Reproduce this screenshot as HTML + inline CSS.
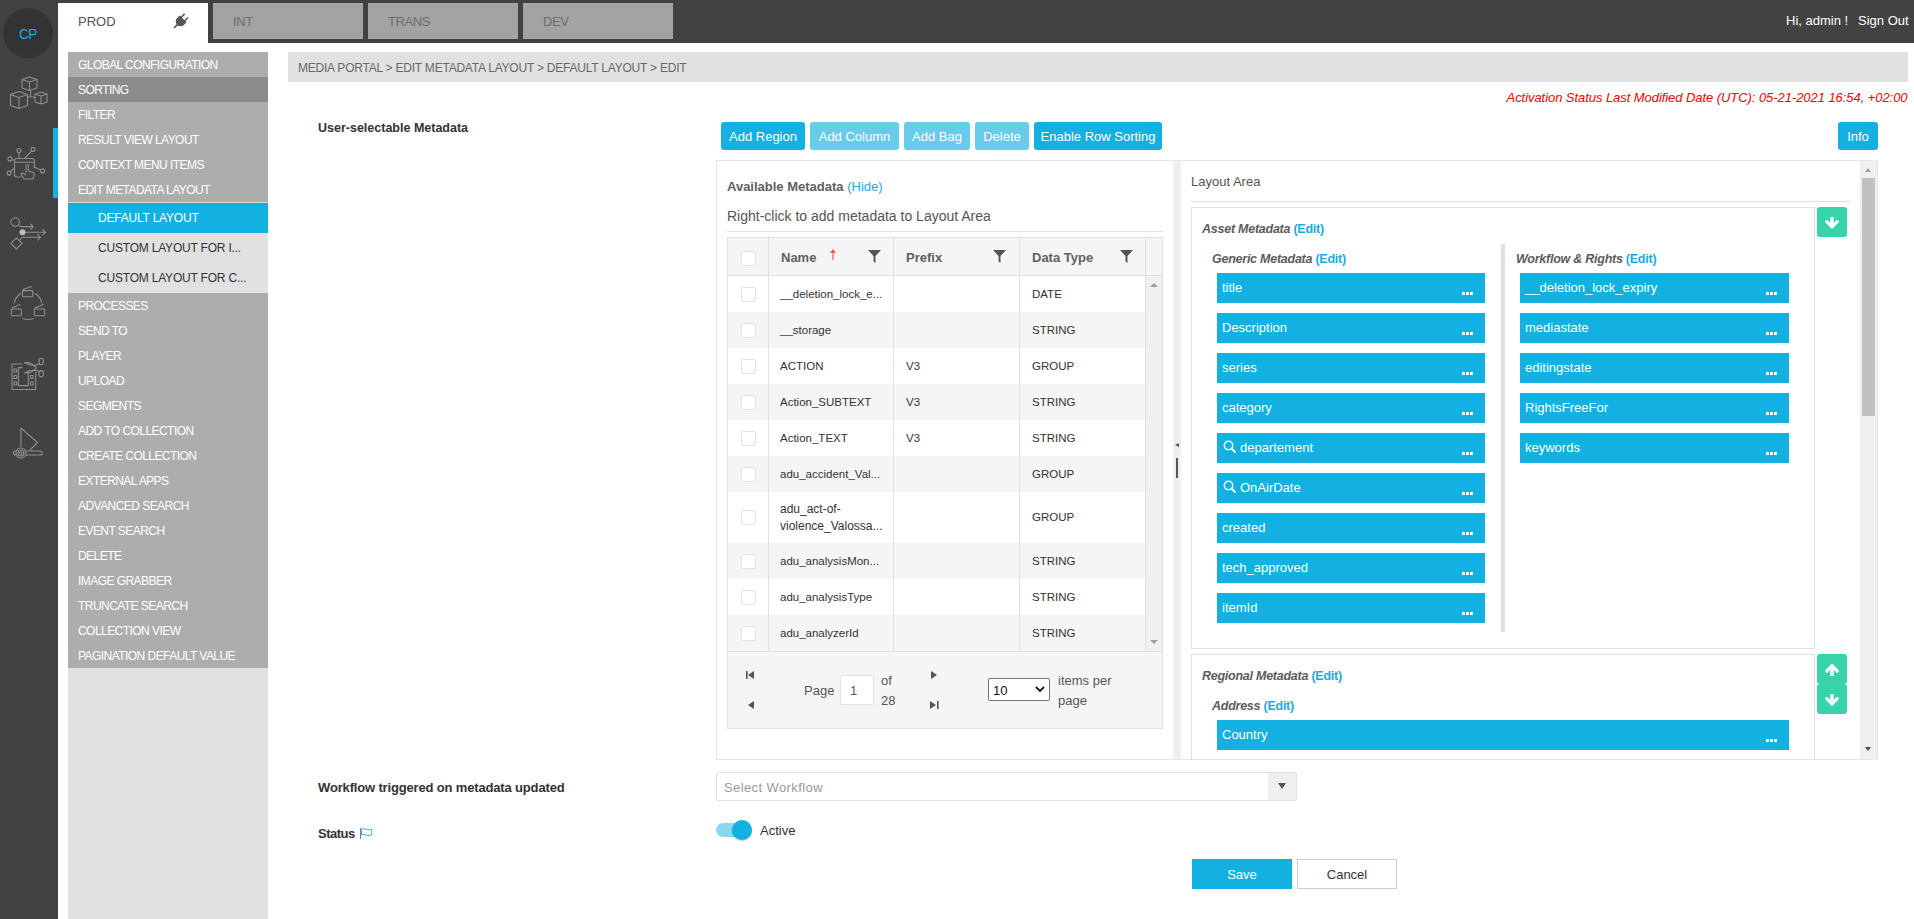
<!DOCTYPE html>
<html><head><meta charset="utf-8">
<style>
*{box-sizing:border-box;margin:0;padding:0}
html,body{width:1914px;height:919px;overflow:hidden;background:#fff;font-family:"Liberation Sans",sans-serif;color:#333}
.a{position:absolute}
.t{position:absolute;white-space:nowrap;line-height:1}
#topbar{left:0;top:0;width:1914px;height:43px;background:#424242}
#side{left:0;top:0;width:58px;height:919px;background:#424242}
.tab{top:3px;height:36px;width:150px;background:#a3a3a3;color:#6e6e6e;font-size:13px;letter-spacing:-0.4px}
.tab span{position:absolute;left:20px;top:11px}
#menu{left:68px;top:52px;width:200px;height:867px;background:#e1e1e1}
.mi{position:absolute;left:0;width:200px;height:25px;background:#adadad;color:#fff;font-size:12px;letter-spacing:-0.55px}
.mi span{position:absolute;left:10px;top:7px;line-height:1}
.sub{position:absolute;left:0;width:200px;height:30px;background:#e1e1e1;color:#333;font-size:12px;letter-spacing:-0.2px}
.sub span{position:absolute;left:30px;top:9px;line-height:1}
.btn{position:absolute;top:122px;height:28px;border-radius:3px;background:#13b1e1;color:#fff;font-size:13px}
.btn span{position:absolute;left:0;right:0;text-align:center;top:8px;line-height:1}
.btn.dis{background:#67cbea}
.tile{position:absolute;height:30px;background:#12b1e1;color:#fff;font-size:13px}
.tile span{position:absolute;left:5px;top:8px;line-height:1}
.tile i{position:absolute;right:20px;top:19px;width:3px;height:3px;background:#fff;box-shadow:4px 0 #fff,8px 0 #fff}
.ed{color:#24a9df;font-style:normal}
.cb{width:15px;height:15px;background:#fff;border:1px solid #e2e2e2;border-radius:2px}
.cell{font-size:11.5px;color:#333}
.hd{font-size:13px;font-weight:bold;color:#606060}
.gbtn{position:absolute;width:30px;height:30px;background:#38d3aa;border-radius:3px}
.gbtn svg{position:absolute;left:0;top:0}
.sect{font-size:12.5px;letter-spacing:-0.25px;font-weight:bold;font-style:italic;color:#5c5c5c}
</style></head><body>
<div id="topbar" class="a"></div>
<div id="side" class="a"></div>
<!-- CP circle -->
<div class="a" style="left:3px;top:8px;width:50px;height:50px;border-radius:50%;background:#333"></div>
<div class="t" style="left:19px;top:26px;font-size:15.3px;letter-spacing:-0.6px;color:#13b1e0;transform:scaleX(0.88);transform-origin:0 0">CP</div>
<!-- active indicator -->
<div class="a" style="left:53px;top:128px;width:5px;height:70px;background:#13b1e1"></div>

<!-- sidebar icons -->
<svg class="a" style="left:0;top:60px" width="58" height="420" viewBox="0 60 58 420" fill="none" stroke="#8e8e8e" stroke-width="1.1" stroke-linejoin="round" stroke-linecap="round">
<path d="M22 79.5 L29.5 77 L37 79.5 L37 88 L29.5 90.5 L22 88 Z M22 79.5 L29.5 82 L37 79.5 M29.5 82 V90.5"/>
<path d="M10.5 94.5 L19 91.5 L27.5 94.5 L27.5 105.5 L19 108.5 L10.5 105.5 Z M10.5 94.5 L19 97.5 L27.5 94.5 M19 97.5 V108.5"/>
<path d="M35 94 L41 92 L47 94 L47 102 L41 104 L35 102 Z M35 94 L41 96 L47 94 M41 96 V104"/>
<path d="M30.5 90.5 V96.5 M27.5 97.5 L30.5 96.5 L35 97.5"/>
<path d="M14.5 176 V161 Q14.5 158.5 17 158.5 H32 Q34.3 158.5 34.3 161 V168 M14.5 162.3 H34.3 M14.5 174.5 Q14.5 177 17 177 H21"/>
<path d="M26 172 V165.5 Q27.2 164 28.4 165.5 V171 L33.5 172.5 Q34.5 173 34 175 L33 179 H24 L21 174 Q22 172.5 24 173.5 L26 175"/>
<circle cx="19" cy="150.5" r="2"/><path d="M19 152.5 V158.5"/>
<circle cx="33.1" cy="149.4" r="2"/><path d="M31.7 150.8 L24.5 158.5"/>
<circle cx="9.9" cy="158.9" r="2"/><path d="M11.8 159.6 L14.5 160.6"/>
<circle cx="9.1" cy="173.1" r="2"/><path d="M10.6 171.7 L14.5 168"/>
<circle cx="42.6" cy="170.9" r="2"/><path d="M40.7 170.1 L34.3 167"/>
<circle cx="15.2" cy="222.1" r="4.3"/>
<path d="M18.5 225 Q19.5 226.6 21.5 226.6 H33.2 M30.5 223.8 L33.2 226.6 L30.5 229.4"/>
<path d="M25.5 232.3 H45.5 M42.7 229.5 L45.5 232.3 L42.7 235.1"/>
<path d="M16.4 237.8 L22 243.4 L16.4 249 L10.8 243.4 Z M20 240 Q21 237.3 23 237.3 H40.4 M37.6 234.5 L40.4 237.3 L37.6 240.1"/>
<rect x="22.5" y="290.6" width="10.2" height="6.1" rx="0.8"/><path d="M23 289.5 L31.5 286.5"/>
<rect x="11.4" y="309" width="9.9" height="6.7" rx="0.8"/><path d="M12 308 L20 304.5"/>
<rect x="34.3" y="309" width="10.3" height="6.7" rx="0.8"/><path d="M35 308 L43 304.5"/>
<path d="M14 303 Q16 296 21 293.5 M35 293.5 Q40 296 42 303 M23 318.5 Q28 320.5 33 318.5"/>
<path d="M22 364 H12 V389.5 H35.7 V372"/>
<path d="M22 367.6 H18.4 V385.6 H28.3 V371"/>
<rect x="14" y="369" width="2.6" height="3"/><rect x="14" y="375.5" width="2.6" height="3"/><rect x="14" y="382" width="2.6" height="3"/>
<rect x="30.5" y="375.5" width="2.6" height="3"/><rect x="30.5" y="382" width="2.6" height="3"/>
<ellipse cx="41.2" cy="361.5" rx="2.3" ry="3.2"/><ellipse cx="41.2" cy="373.8" rx="2.3" ry="3.2"/>
<path d="M39.3 363.6 Q34 367.5 24.5 362.8 Q31 361.5 36.5 368 M39.3 371.7 Q34 368 24.5 373 Q31 374 36.5 368"/>
<path d="M20.9 428 V446.5 M20.9 428 L37.5 442.5 L30 450"/>
<rect x="13.4" y="451" width="28.8" height="4" rx="2"/>
<circle cx="20.9" cy="453" r="5" fill="#424242"/><circle cx="20.9" cy="453" r="3"/><circle cx="20.9" cy="453" r="1.2"/>
<circle cx="22.5" cy="232.3" r="3" fill="#bdbdbd" stroke="none"/>
</svg>

<!-- tabs -->
<div class="a" style="left:58px;top:3px;width:150px;height:49px;background:#fff"></div>
<div class="t" style="left:78px;top:15px;font-size:13px;color:#555">PROD</div>
<svg class="a" style="left:170px;top:11px" width="21" height="21" viewBox="-10.5 -10.5 21 21"><g transform="rotate(45) scale(0.92)"><rect x="-3.6" y="-9" width="1.7" height="5.5" fill="#555"/><rect x="1.9" y="-9" width="1.7" height="5.5" fill="#555"/><path d="M-5.2 -4 H5.2 V0 A5.2 5.2 0 0 1 -5.2 0 Z" fill="#555"/><rect x="-0.9" y="4" width="1.8" height="6" fill="#555"/></g></svg>
<div class="tab a" style="left:213px"><span>INT</span></div>
<div class="tab a" style="left:368px"><span>TRANS</span></div>
<div class="tab a" style="left:523px"><span>DEV</span></div>
<div class="t" style="left:1786px;top:14px;font-size:13px;color:#fff">Hi, admin !</div>
<div class="t" style="left:1858px;top:14px;font-size:13px;color:#fff">Sign Out</div>

<!-- menu -->
<div id="menu" class="a">
<div class="mi" style="top:0px"><span>GLOBAL CONFIGURATION</span></div>
<div class="mi" style="top:25px;background:#8c8c8c"><span>SORTING</span></div>
<div class="mi" style="top:50px"><span>FILTER</span></div>
<div class="mi" style="top:75px"><span>RESULT VIEW LAYOUT</span></div>
<div class="mi" style="top:100px"><span>CONTEXT MENU ITEMS</span></div>
<div class="mi" style="top:125px"><span>EDIT METADATA LAYOUT</span></div>
<div class="a" style="left:0;top:150px;width:200px;height:1px;background:#d6d6d6"></div>
<div class="sub" style="top:151px;background:#12b1e1;color:#fff"><span>DEFAULT LAYOUT</span></div>
<div class="sub" style="top:181px"><span>CUSTOM LAYOUT FOR I...</span></div>
<div class="sub" style="top:211px"><span>CUSTOM LAYOUT FOR C...</span></div>
<div class="mi" style="top:241px"><span>PROCESSES</span></div>
<div class="mi" style="top:266px"><span>SEND TO</span></div>
<div class="mi" style="top:291px"><span>PLAYER</span></div>
<div class="mi" style="top:316px"><span>UPLOAD</span></div>
<div class="mi" style="top:341px"><span>SEGMENTS</span></div>
<div class="mi" style="top:366px"><span>ADD TO COLLECTION</span></div>
<div class="mi" style="top:391px"><span>CREATE COLLECTION</span></div>
<div class="mi" style="top:416px"><span>EXTERNAL APPS</span></div>
<div class="mi" style="top:441px"><span>ADVANCED SEARCH</span></div>
<div class="mi" style="top:466px"><span>EVENT SEARCH</span></div>
<div class="mi" style="top:491px"><span>DELETE</span></div>
<div class="mi" style="top:516px"><span>IMAGE GRABBER</span></div>
<div class="mi" style="top:541px"><span>TRUNCATE SEARCH</span></div>
<div class="mi" style="top:566px"><span>COLLECTION VIEW</span></div>
<div class="mi" style="top:591px"><span>PAGINATION DEFAULT VALUE</span></div>
</div>

<!-- breadcrumb -->
<div class="a" style="left:288px;top:52px;width:1620px;height:30px;background:#e1e1e1"></div>
<div class="t" style="left:298px;top:62px;font-size:12px;color:#686868;letter-spacing:-0.22px">MEDIA PORTAL &gt; EDIT METADATA LAYOUT &gt; DEFAULT LAYOUT &gt; EDIT</div>
<div class="t" style="right:6.5px;top:91px;font-size:13px;color:#f00;font-style:italic;letter-spacing:-0.06px">Activation Status Last Modified Date (UTC): 05-21-2021 16:54, +02:00</div>

<div class="t" style="left:318px;top:122px;font-size:12.5px;font-weight:bold;color:#333">User-selectable Metadata</div>

<!-- buttons -->
<div class="btn" style="left:721px;width:84px"><span>Add Region</span></div>
<div class="btn dis" style="left:810px;width:89px"><span>Add Column</span></div>
<div class="btn dis" style="left:904px;width:66px"><span>Add Bag</span></div>
<div class="btn dis" style="left:975px;width:54px"><span>Delete</span></div>
<div class="btn" style="left:1034px;width:128px"><span>Enable Row Sorting</span></div>
<div class="btn" style="left:1838px;width:40px"><span>Info</span></div>

<!-- outer panel -->
<div class="a" style="left:716px;top:160px;width:1162px;height:600px;border:1px solid #e6e6e6"></div>
<div class="a" style="left:1173px;top:161px;width:8px;height:598px;background:#efefef"></div>
<div class="a" style="left:1175px;top:443px;width:0;height:0;border-top:2.5px solid transparent;border-bottom:2.5px solid transparent;border-right:4px solid #555"></div>
<div class="a" style="left:1176px;top:458px;width:2px;height:20px;background:#555"></div>
<div class="t" style="left:727px;top:180px;font-size:13px;font-weight:bold;color:#606060">Available Metadata <span class="ed" style="font-weight:normal">(Hide)</span></div>
<div class="t" style="left:727px;top:209px;font-size:14px;color:#555">Right-click to add metadata to Layout Area</div>
<div class="a" style="left:727px;top:231px;width:436px;height:1px;background:#e0e0e0"></div>
<div class="a" style="left:727px;top:237px;width:436px;height:492px;border:1px solid #e0e0e0;background:#f5f5f5"></div>
<div class="a" style="left:728px;top:238px;width:434px;height:37px;background:#f5f5f5"></div>
<div class="a" style="left:728px;top:275px;width:434px;height:1px;background:#e0e0e0"></div>
<div class="a" style="left:728px;top:276px;width:417px;height:36px;background:#fff"></div>
<div class="a cb" style="left:741px;top:287px"></div>
<div class="t cell" style="left:780px;top:289px">__deletion_lock_e...</div>
<div class="t cell" style="left:1032px;top:289px">DATE</div>
<div class="a" style="left:728px;top:312px;width:417px;height:36px;background:#f5f5f5"></div>
<div class="a cb" style="left:741px;top:323px"></div>
<div class="t cell" style="left:780px;top:325px">__storage</div>
<div class="t cell" style="left:1032px;top:325px">STRING</div>
<div class="a" style="left:728px;top:348px;width:417px;height:36px;background:#fff"></div>
<div class="a cb" style="left:741px;top:359px"></div>
<div class="t cell" style="left:780px;top:361px">ACTION</div>
<div class="t cell" style="left:906px;top:361px">V3</div>
<div class="t cell" style="left:1032px;top:361px">GROUP</div>
<div class="a" style="left:728px;top:384px;width:417px;height:36px;background:#f5f5f5"></div>
<div class="a cb" style="left:741px;top:395px"></div>
<div class="t cell" style="left:780px;top:397px">Action_SUBTEXT</div>
<div class="t cell" style="left:906px;top:397px">V3</div>
<div class="t cell" style="left:1032px;top:397px">STRING</div>
<div class="a" style="left:728px;top:420px;width:417px;height:36px;background:#fff"></div>
<div class="a cb" style="left:741px;top:431px"></div>
<div class="t cell" style="left:780px;top:433px">Action_TEXT</div>
<div class="t cell" style="left:906px;top:433px">V3</div>
<div class="t cell" style="left:1032px;top:433px">STRING</div>
<div class="a" style="left:728px;top:456px;width:417px;height:36px;background:#f5f5f5"></div>
<div class="a cb" style="left:741px;top:467px"></div>
<div class="t cell" style="left:780px;top:469px">adu_accident_Val...</div>
<div class="t cell" style="left:1032px;top:469px">GROUP</div>
<div class="a" style="left:728px;top:492px;width:417px;height:51px;background:#fff"></div>
<div class="a cb" style="left:741px;top:510px"></div>
<div class="t" style="left:780px;top:501px;font-size:12px;color:#333;line-height:17px;white-space:normal">adu_act-of-<br>violence_Valossa...</div>
<div class="t cell" style="left:1032px;top:512px">GROUP</div>
<div class="a" style="left:728px;top:543px;width:417px;height:36px;background:#f5f5f5"></div>
<div class="a cb" style="left:741px;top:554px"></div>
<div class="t cell" style="left:780px;top:556px">adu_analysisMon...</div>
<div class="t cell" style="left:1032px;top:556px">STRING</div>
<div class="a" style="left:728px;top:579px;width:417px;height:36px;background:#fff"></div>
<div class="a cb" style="left:741px;top:590px"></div>
<div class="t cell" style="left:780px;top:592px">adu_analysisType</div>
<div class="t cell" style="left:1032px;top:592px">STRING</div>
<div class="a" style="left:728px;top:615px;width:417px;height:36px;background:#f5f5f5"></div>
<div class="a cb" style="left:741px;top:626px"></div>
<div class="t cell" style="left:780px;top:628px">adu_analyzerId</div>
<div class="t cell" style="left:1032px;top:628px">STRING</div>
<div class="a" style="left:768px;top:238px;width:1px;height:413px;background:#e0e0e0"></div>
<div class="a" style="left:893px;top:238px;width:1px;height:413px;background:#e0e0e0"></div>
<div class="a" style="left:1019px;top:238px;width:1px;height:413px;background:#e0e0e0"></div>
<div class="a" style="left:1145px;top:238px;width:1px;height:413px;background:#e0e0e0"></div>
<div class="a" style="left:1146px;top:276px;width:16px;height:375px;background:#f0f0f0"></div>
<div class="a" style="left:1150px;top:283px;width:0;height:0;border-left:4px solid transparent;border-right:4px solid transparent;border-bottom:4px solid #a0a0a0"></div>
<div class="a" style="left:1150px;top:640px;width:0;height:0;border-left:4px solid transparent;border-right:4px solid transparent;border-top:4px solid #a0a0a0"></div>
<div class="a" style="left:728px;top:651px;width:434px;height:1px;background:#e0e0e0"></div>
<div class="a cb" style="left:741px;top:251px"></div>
<div class="t hd" style="left:781px;top:251px">Name</div>
<div class="t hd" style="left:906px;top:251px">Prefix</div>
<div class="t hd" style="left:1032px;top:251px">Data Type</div>
<svg class="a" style="left:829px;top:248px" width="8" height="13" viewBox="0 0 8 13"><path d="M4 1 L1 5 H3.4 V12 H4.6 V5 H7 Z" fill="#f55"/></svg>
<svg class="a" style="left:868px;top:250px" width="13" height="13" viewBox="0 0 13 13"><path d="M0 0 H13 L7.5 6 V13 L5.5 11.5 V6 Z" fill="#555"/></svg>
<svg class="a" style="left:993px;top:250px" width="13" height="13" viewBox="0 0 13 13"><path d="M0 0 H13 L7.5 6 V13 L5.5 11.5 V6 Z" fill="#555"/></svg>
<svg class="a" style="left:1120px;top:250px" width="13" height="13" viewBox="0 0 13 13"><path d="M0 0 H13 L7.5 6 V13 L5.5 11.5 V6 Z" fill="#555"/></svg>
<svg class="a" style="left:746px;top:671px" width="9" height="9" viewBox="0 0 9 9"><rect x="0" y="0" width="1.6" height="8" fill="#555"/><path d="M8 0 V8 L2 4 Z" fill="#555"/></svg>
<svg class="a" style="left:747px;top:701px" width="8" height="9" viewBox="0 0 8 9"><path d="M7 0 V8 L1 4 Z" fill="#555"/></svg>
<svg class="a" style="left:930px;top:671px" width="8" height="9" viewBox="0 0 8 9"><path d="M1 0 V8 L7 4 Z" fill="#555"/></svg>
<svg class="a" style="left:930px;top:701px" width="9" height="9" viewBox="0 0 9 9"><path d="M0 0 V8 L6 4 Z" fill="#555"/><rect x="7" y="0" width="1.6" height="8" fill="#555"/></svg>
<div class="t" style="left:804px;top:684px;font-size:13px;color:#555">Page</div>
<div class="a" style="left:840px;top:675px;width:34px;height:30px;background:#fff;border:1px solid #e2e2e2;border-radius:2px"></div>
<div class="t" style="left:850px;top:684px;font-size:13px;color:#555">1</div>
<div class="t" style="left:881px;top:674px;font-size:13px;color:#555">of</div>
<div class="t" style="left:881px;top:694px;font-size:13px;color:#555">28</div>
<div class="a" style="left:988px;top:678px;width:62px;height:23px;background:#fff;border:1px solid #767676;border-radius:2px"></div>
<div class="t" style="left:993px;top:684px;font-size:13px;color:#111">10</div>
<svg class="a" style="left:1035px;top:686px" width="10" height="7" viewBox="0 0 10 7"><path d="M1 1 L5 5 L9 1" stroke="#111" stroke-width="1.8" fill="none"/></svg>
<div class="t" style="left:1058px;top:674px;font-size:13px;color:#555">items per</div>
<div class="t" style="left:1058px;top:694px;font-size:13px;color:#555">page</div>
<!-- layout area -->
<div class="t" style="left:1191px;top:175px;font-size:13px;color:#555">Layout Area</div>
<div class="a" style="left:1191px;top:201px;width:659px;height:1px;background:#e0e0e0"></div>
<div class="a" style="left:1191px;top:207px;width:624px;height:442px;border:1px solid #e0e0e0"></div>
<div class="gbtn" style="left:1817px;top:207px"><svg width="30" height="30" viewBox="0 0 30 30"><path d="M15 10 V18" stroke="#fff" stroke-width="3.3"/><path d="M9.8 14.6 L15 19.8 L20.2 14.6" stroke="#fff" stroke-width="3.2" stroke-linecap="round" stroke-linejoin="miter" fill="none"/></svg></div>
<div class="t sect" style="left:1202px;top:223px">Asset Metadata <span class="ed">(Edit)</span></div>
<div class="t sect" style="left:1212px;top:253px">Generic Metadata <span class="ed">(Edit)</span></div>
<div class="t sect" style="left:1516px;top:253px">Workflow &amp; Rights <span class="ed">(Edit)</span></div>
<div class="a" style="left:1501px;top:244px;width:4px;height:388px;background:#e0e0e0"></div>
<div class="tile" style="left:1217px;top:273px;width:268px"><span>title</span><i></i></div>
<div class="tile" style="left:1217px;top:313px;width:268px"><span>Description</span><i></i></div>
<div class="tile" style="left:1217px;top:353px;width:268px"><span>series</span><i></i></div>
<div class="tile" style="left:1217px;top:393px;width:268px"><span>category</span><i></i></div>
<div class="tile" style="left:1217px;top:433px;width:268px"><svg class="a" style="left:6px;top:7px" width="14" height="14" viewBox="0 0 14 14"><circle cx="5.5" cy="5.5" r="4.2" stroke="#fff" stroke-width="1.5" fill="none"/><path d="M8.5 8.5 L12.5 12.5" stroke="#fff" stroke-width="2"/></svg><span style="left:23px">departement</span><i></i></div>
<div class="tile" style="left:1217px;top:473px;width:268px"><svg class="a" style="left:6px;top:7px" width="14" height="14" viewBox="0 0 14 14"><circle cx="5.5" cy="5.5" r="4.2" stroke="#fff" stroke-width="1.5" fill="none"/><path d="M8.5 8.5 L12.5 12.5" stroke="#fff" stroke-width="2"/></svg><span style="left:23px">OnAirDate</span><i></i></div>
<div class="tile" style="left:1217px;top:513px;width:268px"><span>created</span><i></i></div>
<div class="tile" style="left:1217px;top:553px;width:268px"><span>tech_approved</span><i></i></div>
<div class="tile" style="left:1217px;top:593px;width:268px"><span>itemId</span><i></i></div>
<div class="tile" style="left:1520px;top:273px;width:269px"><span>__deletion_lock_expiry</span><i></i></div>
<div class="tile" style="left:1520px;top:313px;width:269px"><span>mediastate</span><i></i></div>
<div class="tile" style="left:1520px;top:353px;width:269px"><span>editingstate</span><i></i></div>
<div class="tile" style="left:1520px;top:393px;width:269px"><span>RightsFreeFor</span><i></i></div>
<div class="tile" style="left:1520px;top:433px;width:269px"><span>keywords</span><i></i></div>
<div class="a" style="left:1191px;top:654px;width:624px;height:106px;border:1px solid #e0e0e0;border-bottom:none"></div>
<div class="gbtn" style="left:1817px;top:654px;height:30px"><svg width="30" height="30" viewBox="0 0 30 30"><path d="M15 22 V13" stroke="#fff" stroke-width="3.3"/><path d="M9.8 17 L15 11.8 L20.2 17" stroke="#fff" stroke-width="3.2" stroke-linecap="round" stroke-linejoin="miter" fill="none"/></svg></div>
<div class="gbtn" style="left:1817px;top:684px;height:30px"><svg width="30" height="30" viewBox="0 0 30 30"><path d="M15 10 V18" stroke="#fff" stroke-width="3.3"/><path d="M9.8 14.6 L15 19.8 L20.2 14.6" stroke="#fff" stroke-width="3.2" stroke-linecap="round" stroke-linejoin="miter" fill="none"/></svg></div>
<div class="t sect" style="left:1202px;top:670px">Regional Metadata <span class="ed">(Edit)</span></div>
<div class="t sect" style="left:1212px;top:700px">Address <span class="ed">(Edit)</span></div>
<div class="tile" style="left:1217px;top:720px;width:572px"><span>Country</span><i></i></div>
<div class="a" style="left:1860px;top:161px;width:17px;height:598px;background:#f0f0f0"></div>
<div class="a" style="left:1862px;top:178px;width:13px;height:238px;background:#c1c1c1"></div>
<div class="a" style="left:1865px;top:168px;width:0;height:0;border-left:3.5px solid transparent;border-right:3.5px solid transparent;border-bottom:4px solid #a0a0a0"></div>
<div class="a" style="left:1865px;top:747px;width:0;height:0;border-left:3.5px solid transparent;border-right:3.5px solid transparent;border-top:4px solid #505050"></div>
<div class="t" style="left:318px;top:781px;font-size:13px;font-weight:bold;color:#333;letter-spacing:-0.16px">Workflow triggered on metadata updated</div>
<div class="a" style="left:716px;top:772px;width:581px;height:29px;border:1px solid #e0e0e0;border-radius:2px;background:#fff"></div>
<div class="a" style="left:1268px;top:773px;width:28px;height:27px;background:#f0f0f0"></div>
<div class="a" style="left:1278px;top:783px;width:0;height:0;border-left:4px solid transparent;border-right:4px solid transparent;border-top:6px solid #555"></div>
<div class="t" style="left:724px;top:781px;font-size:13px;color:#999;letter-spacing:0.4px">Select Workflow</div>
<div class="t" style="left:318px;top:827px;font-size:13px;font-weight:bold;color:#333;letter-spacing:-0.5px">Status</div>
<svg class="a" style="left:359px;top:827px" width="15" height="13" viewBox="0 0 15 13"><path d="M1.5 1 V12" stroke="#5b8fc0" stroke-width="1"/><path d="M2.5 2.2 Q5 1.2 7.5 2.4 Q10 3.6 12.7 2.2 V8 Q10 9.4 7.5 8.2 Q5 7 2.5 8 Z" stroke="#3a9fd6" stroke-width="0.9" fill="none"/></svg>
<div class="a" style="left:716px;top:823px;width:30px;height:14px;border-radius:7px;background:#8ad8f0"></div>
<div class="a" style="left:732px;top:820px;width:20px;height:20px;border-radius:50%;background:#13b1e1;box-shadow:0 1px 1.5px rgba(0,0,0,.25)"></div>
<div class="t" style="left:760px;top:824px;font-size:13px;color:#333">Active</div>
<div class="a" style="left:1192px;top:859px;width:100px;height:30px;background:#13b1e1"></div>
<div class="t" style="left:1192px;top:868px;width:100px;text-align:center;font-size:13px;color:#fff">Save</div>
<div class="a" style="left:1297px;top:859px;width:100px;height:30px;background:#fff;border:1px solid #ccc"></div>
<div class="t" style="left:1297px;top:868px;width:100px;text-align:center;font-size:13px;color:#333">Cancel</div>
</body></html>
